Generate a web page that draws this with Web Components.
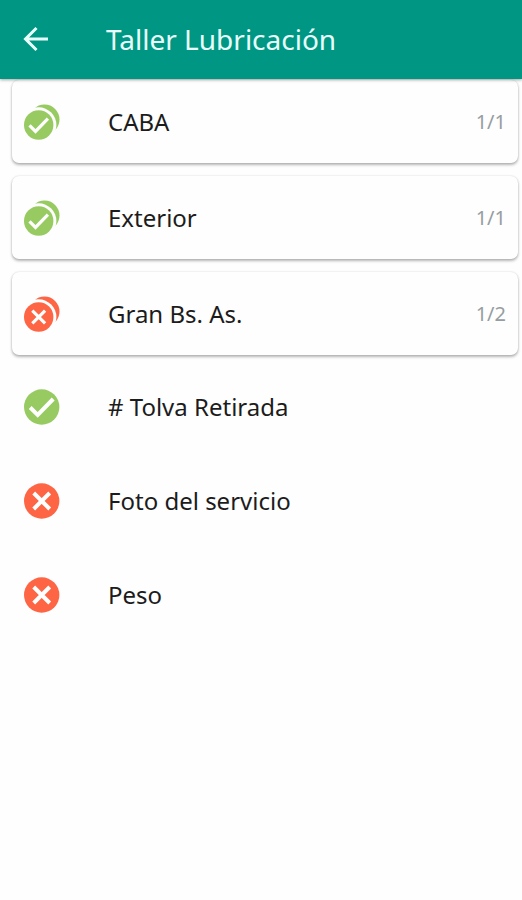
<!DOCTYPE html>
<html lang="es">
<head>
<meta charset="utf-8">
<meta name="viewport" content="width=device-width, initial-scale=1">
<title>Taller Lubricación</title>
<style>
  body { margin: 0; background: #fefefe; color: #1c1c1c; font-family: "Noto Sans", sans-serif; font-weight: 400; }
</style>
</head>
<body>
<workshop-screen>
  <app-bar slot="bar">Taller Lubricación</app-bar>
  <task-row card status="done" count="1/1">CABA</task-row>
  <task-row card status="done" count="1/1">Exterior</task-row>
  <task-row card status="failed" count="1/2">Gran Bs. As.</task-row>
  <task-row slot="items" status="done"># Tolva Retirada</task-row>
  <task-row slot="items" status="failed">Foto del servicio</task-row>
  <task-row slot="items" status="failed">Peso</task-row>
</workshop-screen>

<script>
  class WorkshopScreen extends HTMLElement {
    constructor() {
      super();
      this.attachShadow({ mode: "open" }).innerHTML = `
        <style>
          :host { display: flex; flex-direction: column; min-height: 100vh; }
          .groups { display: flex; flex-direction: column; gap: 13px; padding: 1px 4px 5px 12px; }
          .items { display: flex; flex-direction: column; padding: 0 4px 0 12px; }
        </style>
        <slot name="bar"></slot>
        <main>
          <div class="groups"><slot></slot></div>
          <div class="items"><slot name="items"></slot></div>
        </main>`;
    }
  }

  class AppBar extends HTMLElement {
    constructor() {
      super();
      this.attachShadow({ mode: "open" }).innerHTML = `
        <style>
          :host { display: block; position: relative; background: #009684; color: #e9fffa;
                  box-shadow: 0 1px 3px rgba(0, 0, 0, .35); }
          header { display: flex; align-items: center; height: 77px; padding: 0 18px 2px; }
          button { display: flex; width: 36px; height: 36px; padding: 0; border: 0;
                   background: none; color: inherit; align-items: center; justify-content: center; }
          h1 { margin: 0 0 0 52px; font-size: 28px; line-height: 36px; font-weight: inherit; }
        </style>
        <header>
          <button type="button" aria-label="Volver">
            <svg width="26" height="26" viewBox="0 0 26 26" fill="none" stroke="currentColor" stroke-width="3" aria-hidden="true">
              <path d="M25 13H3M13.5 2L2.5 13L13.5 24"/>
            </svg>
          </button>
          <h1><slot></slot></h1>
        </header>`;
    }
  }

  class StatusIcon extends HTMLElement {
    constructor() {
      super();
      this.attachShadow({ mode: "open" });
    }
    connectedCallback() {
      const done = this.getAttribute("status") === "done";
      const stacked = this.hasAttribute("stacked");
      const color = done ? "#97cb62" : "#fd6544";
      const mark = done ? "M-11.5 .5L-4 8L11.5 -8" : "M-8 -8L8 8M8 -8L-8 8";
      const badge = stacked
        ? `<circle cx="20.5" cy="15.5" r="15" fill="${color}"/>
           <circle cx="14.7" cy="21" r="17.7" fill="#fefefe"/>
           <circle cx="14.7" cy="21" r="14.7" fill="${color}"/>
           <path transform="translate(14.7 21) scale(.8)" d="${mark}"/>`
        : `<circle cx="17.7" cy="18" r="17.7" fill="${color}"/>
           <path transform="translate(17.7 18)" d="${mark}"/>`;
      this.shadowRoot.innerHTML = `
        <style>:host { display: block; flex: none; width: 36px; height: 36px; } svg { display: block; }</style>
        <svg width="36" height="36" viewBox="0 0 36 36" fill="none" stroke-width="0" role="img"
             aria-label="${done ? "Completo" : "Pendiente"}">
          <style>path { stroke: #fff; stroke-width: 4px; }</style>${badge}
        </svg>`;
    }
  }

  class TaskRow extends HTMLElement {
    constructor() {
      super();
      this.attachShadow({ mode: "open" });
    }
    connectedCallback() {
      const count = this.getAttribute("count");
      this.shadowRoot.innerHTML = `
        <style>
          :host { display: block; }
          button { display: flex; align-items: center; box-sizing: border-box; width: 100%; height: 94px;
                   padding: 0 12px; border: 0; border-radius: 7px; background: none;
                   color: inherit; font: inherit; text-align: left; }
          :host([card]) button { height: 83px; background: #fefefe;
                   box-shadow: 0 2px 3px rgba(0, 0, 0, .28), 0 0 2px rgba(0, 0, 0, .16); }
          .label { flex: 1; margin-left: 48px; font-size: 24px; line-height: 32px; }
          .count { color: #969da1; font-size: 20px; line-height: 32px; }
        </style>
        <button type="button">
          <status-icon status="${this.getAttribute("status")}" ${this.hasAttribute("card") ? "stacked" : ""}></status-icon>
          <span class="label"><slot></slot></span>
          ${count ? `<span class="count">${count}</span>` : ""}
        </button>`;
    }
  }

  customElements.define("status-icon", StatusIcon);
  customElements.define("task-row", TaskRow);
  customElements.define("app-bar", AppBar);
  customElements.define("workshop-screen", WorkshopScreen);
</script>
</body>
</html>
